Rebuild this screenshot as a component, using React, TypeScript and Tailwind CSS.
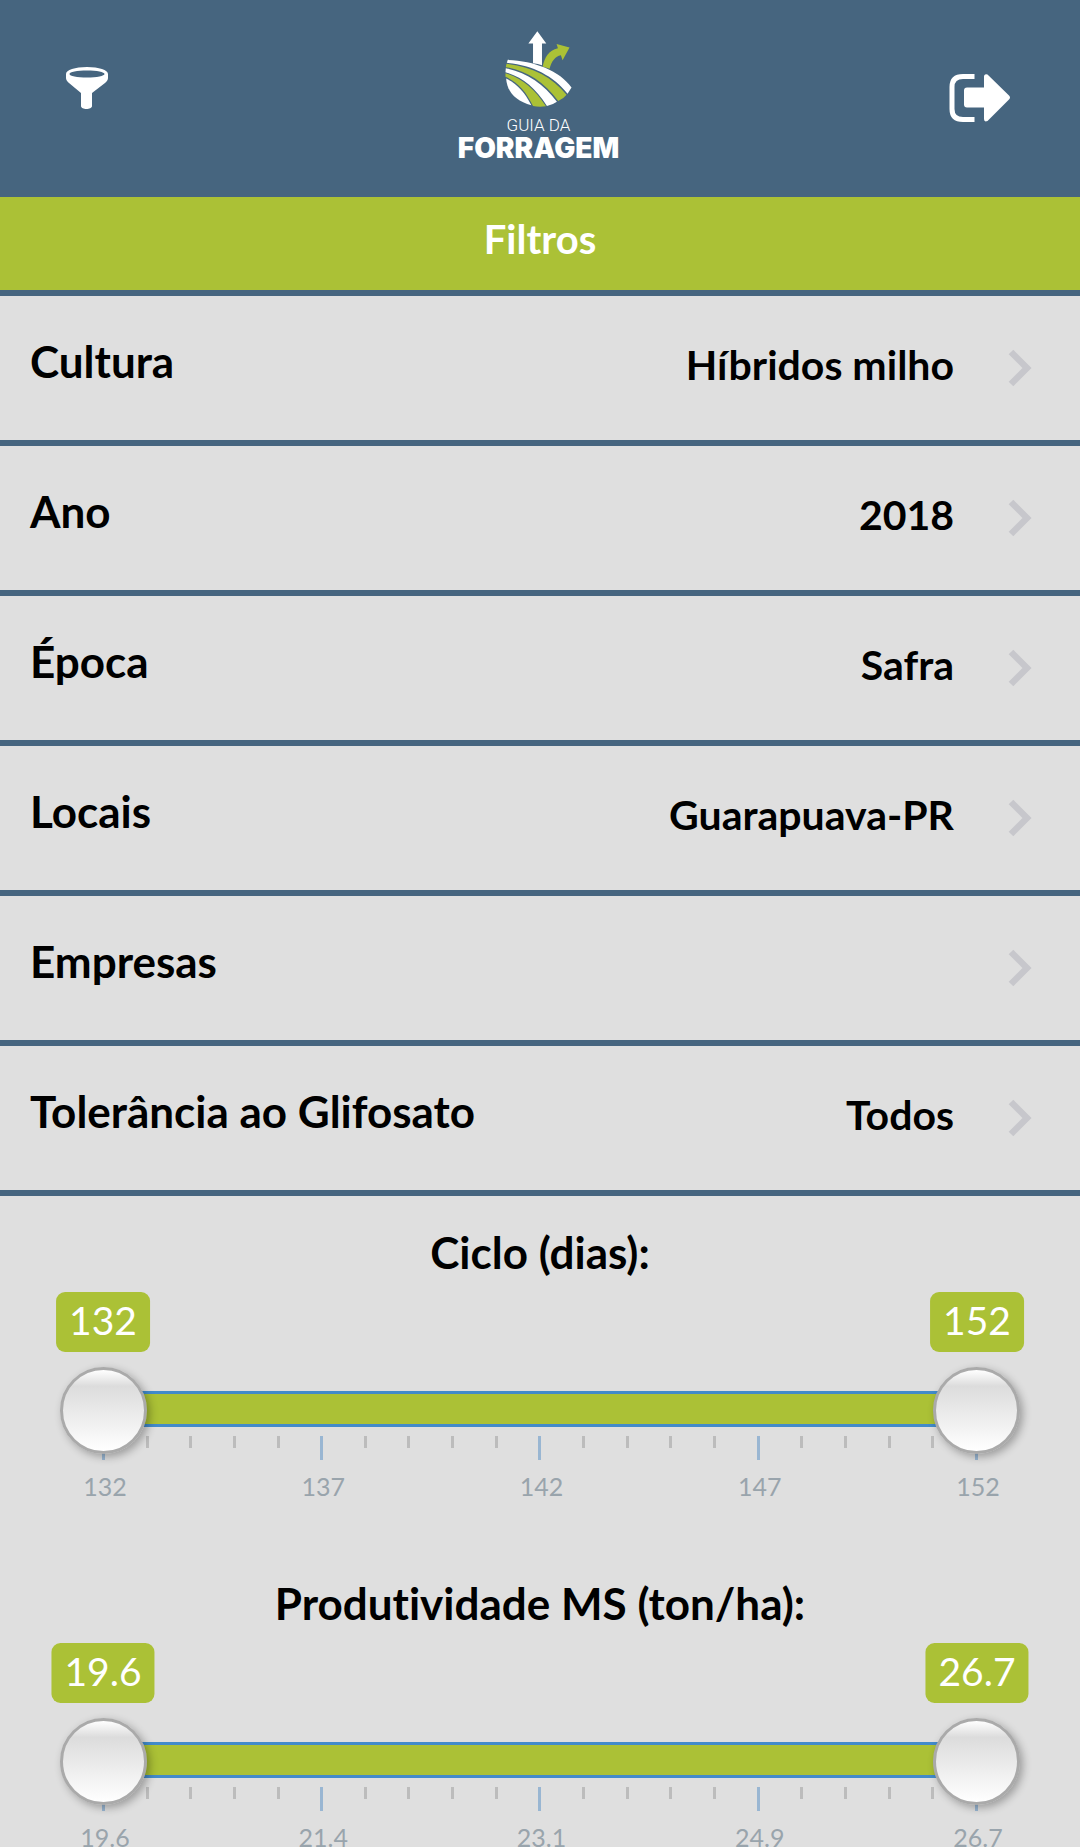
import { useState } from "react";

type Filter = { label: string; value: string };

const filters: Filter[] = [
  { label: "Cultura", value: "Híbridos milho" },
  { label: "Ano", value: "2018" },
  { label: "Época", value: "Safra" },
  { label: "Locais", value: "Guarapuava-PR" },
  { label: "Empresas", value: "" },
  { label: "Tolerância ao Glifosato", value: "Todos" },
];

function FunnelIcon() {
  return (
    <svg viewBox="0 0 42 42" className="h-[42px] w-[42px]" fill="#fff" aria-hidden="true">
      <path
        fillRule="evenodd"
        d="M21 0C9 0 0 3 0 7v4c0 2 1 3 3 5l12 10v13c0 4 11 4 11 0V26l13-10c2-2 3-3 3-5V7c0-4-9-7-21-7Zm0 3.500c10 0 17.500 1.600 17.500 3.500S31 10.500 21 10.500 3.500 9 3.500 7 11 3.500 21 3.500Z"
      />
    </svg>
  );
}

function LogoutIcon() {
  return (
    <svg viewBox="0 0 62 50" className="h-[50px] w-[62px]" aria-hidden="true">
      <path d="M23 3.500h-9Q3 3.500 3 14v22q0 10.500 11 10.500h9" fill="none" stroke="#fff" strokeWidth="5" strokeLinecap="square" strokeLinejoin="round" />
      <path
        d="M18 14.500h17V4q0-3.500 3.500-2.500L60 22.500q2 2 0 4L38.500 48q-3.500 1.500-3.500-2V34.500H18q-3 0-3-3v-14q0-3 3-3Z"
        fill="#fff"
      />
    </svg>
  );
}

function Logo() {
  return (
    <div className="flex flex-col items-center text-white">
      <svg viewBox="196 30 204 232" className="h-[77px] w-[68px]" aria-hidden="true">
        <path d="M296 31 323 68H310V133Q298 129 283 127V68H269Z" fill="#fff" />
        <path d="M312 137C318 110 330 88 358 82L354 69 393 80 372 118 367 103C350 106 338 122 333 144Z" fill="#abc136" />
        <path d="M207 117C285 119 365 150 399 200L387 219C345 165 280 132 204 126Z" fill="#fff" />
        <path d="M203 129C280 137 342 170 384 222Q374 235 359 241C315 182 262 149 201 139Z" fill="#abc136" />
        <path d="M201 142C262 154 314 188 355 243Q341 253 325 256C290 200 250 168 200 154Z" fill="#fff" />
        <path d="M200 157C250 172 288 204 322 257Q301 260 283 256C262 212 236 184 200 168Z" fill="#abc136" />
        <path d="M202 173C234 188 258 214 278 254C232 242 205 215 202 173Z" fill="#fff" />
      </svg>
      <span className="mt-[7px] font-['Roboto'] text-[17px] leading-5 font-light">GUIA DA</span>
      <span className="font-['Inter'] text-[28px] leading-[26px] font-black">FORRAGEM</span>
    </div>
  );
}

function FilterRow({ label, value }: Filter) {
  return (
    <li className="border-b-6 border-[#46657f]">
      <button type="button" className="flex h-36 w-full items-center justify-between pr-12 pl-[30px] text-left">
        <span className="mb-[14px] text-[44px] leading-[60px]">{label}</span>
        <span className="flex items-center">
          <span className="mb-1.5 text-[41px] leading-[60px]">{value}</span>
          <svg viewBox="0 0 24 38" className="ml-[54px] h-[38px] w-6" aria-hidden="true">
            <path d="M3 3 19 19 3 35" fill="none" stroke="#c7c7cc" strokeWidth="6.500" />
          </svg>
        </span>
      </button>
    </li>
  );
}

const rangeClass =
  "pointer-events-none absolute inset-0 h-[87px] w-full appearance-none bg-transparent [&::-webkit-slider-runnable-track]:bg-transparent [&::-webkit-slider-thumb]:pointer-events-auto [&::-webkit-slider-thumb]:h-[87px] [&::-webkit-slider-thumb]:w-[87px] [&::-webkit-slider-thumb]:appearance-none [&::-webkit-slider-thumb]:rounded-full [&::-webkit-slider-thumb]:border-3 [&::-webkit-slider-thumb]:border-[#aaaaaa] [&::-webkit-slider-thumb]:bg-[linear-gradient(to_bottom,#ffffff_0%,#dcdcdc_20%,#ffffff_100%)] [&::-webkit-slider-thumb]:shadow-[3px_3px_9px_rgba(0,0,0,0.3)]";

type RangeProps = { title: string; min: number; max: number; step: number; labels: string[] };

function RangeFilter({ title, min, max, step, labels }: RangeProps) {
  const [low, setLow] = useState(min);
  const [high, setHigh] = useState(max);
  const digits = step < 1 ? 1 : 0;
  const percent = (n: number) => ((n - min) / (max - min)) * 100;

  return (
    <section className="px-[60px] pt-[26px] pb-[43px]">
      <h2 className="text-center text-[44px] leading-[60px]">{title}</h2>
      <div className="relative mx-[43px] mt-2.5 h-[60px]">
        {[low, high].map((n, i) => (
          <output
            key={i}
            className="absolute top-0 -translate-x-1/2 rounded-[9px] bg-[#abc136] px-[13px] pb-1 text-[39px] leading-[56px] font-normal text-white"
            style={{ left: `${percent(n)}%` }}
          >
            {n.toFixed(digits)}
          </output>
        ))}
      </div>
      <div className="relative z-10 mt-[15px] h-[87px] px-[43px] pt-6">
        <div
          className="h-9 border-y-3 border-[#428bca] bg-[#abc136]"
          style={{ marginLeft: `${percent(low)}%`, marginRight: `${100 - percent(high)}%` }}
        />
        <input
          type="range"
          aria-label={`${title} mínimo`}
          className={rangeClass}
          min={min}
          max={max}
          step={step}
          value={low}
          onChange={(e) => setLow(Math.min(Number(e.target.value), high))}
        />
        <input
          type="range"
          aria-label={`${title} máximo`}
          className={rangeClass}
          min={min}
          max={max}
          step={step}
          value={high}
          onChange={(e) => setHigh(Math.max(Number(e.target.value), low))}
        />
      </div>
      <div className="-mt-[18px] flex h-6 justify-between px-[42px]">
        {Array.from({ length: 21 }, (_, i) => (
          <span key={i} className={i % 5 === 0 ? "h-6 w-[3px] bg-[#99b6d2]" : "h-3 w-[3px] bg-[#bcbcbc]"} />
        ))}
      </div>
      <div className="mt-2 flex justify-between pr-[42px] pl-[45px] text-[25px] leading-9 font-normal text-[#99a4ac]">
        {labels.map((l) => (
          <span key={l} className="flex w-0 justify-center">
            <span>{l}</span>
          </span>
        ))}
      </div>
    </section>
  );
}

export default function App() {
  return (
    <div className="flex h-screen flex-col bg-[#dfdfdf] font-['Lato','Open_Sans',sans-serif] font-bold text-black [font-variant-ligatures:none]">
      <header className="grid shrink-0 grid-cols-[1fr_auto_1fr] items-start bg-[#46657f] pt-[31px] pr-[69px] pb-9 pl-[66px]">
        <button type="button" aria-label="Filtrar" className="mt-9 justify-self-start">
          <FunnelIcon />
        </button>
        <Logo />
        <button type="button" aria-label="Sair" className="mt-[42px] justify-self-end">
          <LogoutIcon />
        </button>
      </header>
      <h1 className="shrink-0 border-b-6 border-[#46657f] bg-[#abc136] pt-3 pb-[21px] text-center text-[40px] leading-[60px] text-white">
        Filtros
      </h1>
      <main className="min-h-0 flex-1 overflow-y-auto [scrollbar-width:none]">
        <ul>
          {filters.map((f) => (
            <FilterRow key={f.label} {...f} />
          ))}
        </ul>
        <RangeFilter title="Ciclo (dias):" min={132} max={152} step={1} labels={["132", "137", "142", "147", "152"]} />
        <RangeFilter
          title="Produtividade MS (ton/ha):"
          min={19.6}
          max={26.7}
          step={0.1}
          labels={["19.6", "21.4", "23.1", "24.9", "26.7"]}
        />
      </main>
    </div>
  );
}
